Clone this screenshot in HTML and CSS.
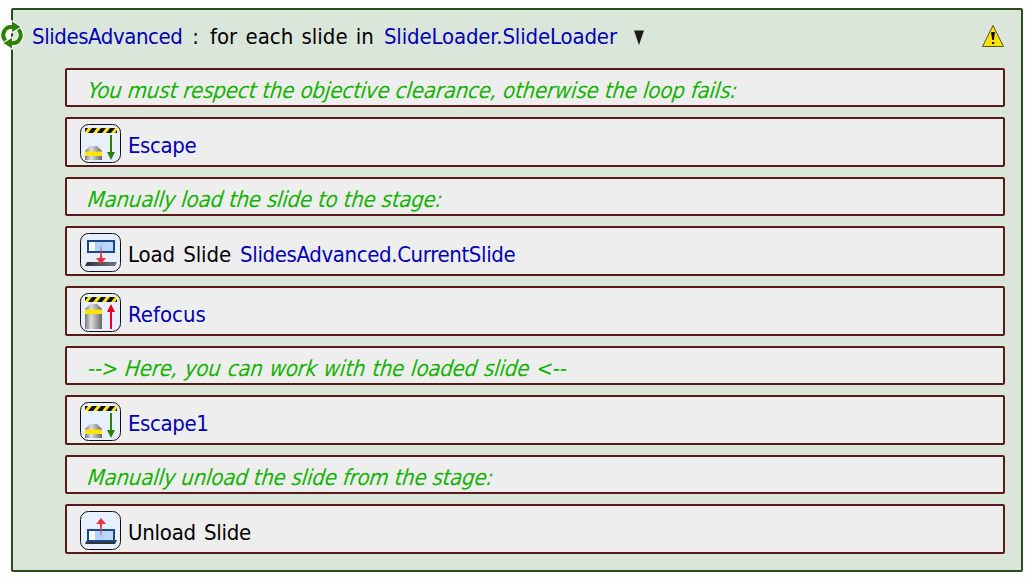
FILE: index.html
```
<!DOCTYPE html>
<html lang="en">
<head>
<meta charset="utf-8">
<title>SlidesAdvanced</title>
<link rel="stylesheet" href="styles.css">
</head>
<body>
<svg class="defs" width="0" height="0" aria-hidden="true">
  <defs>
    <linearGradient id="metal"><stop offset="0" stop-color="#777"/><stop offset=".35" stop-color="#ddd"/><stop offset=".55" stop-color="#bbb"/><stop offset="1" stop-color="#686868"/></linearGradient>
    <linearGradient id="glass"><stop offset="0" stop-color="#a6ccff"/><stop offset="1" stop-color="#c3dcff"/></linearGradient>
    <linearGradient id="fadeDown" x2="0" y2="1"><stop offset="0" stop-color="#e8333d" stop-opacity=".1"/><stop offset=".6" stop-color="#e8333d"/></linearGradient>
    <linearGradient id="fadeUp" x2="0" y2="1"><stop offset=".4" stop-color="#e8333d"/><stop offset="1" stop-color="#e8333d" stop-opacity=".1"/></linearGradient>
    <linearGradient id="plate"><stop offset="0" stop-color="#333"/><stop offset="1" stop-color="#777"/></linearGradient>
    <g id="hazard">
      <path fill="#ffe21a" d="M5 4h32v5H5z"/>
      <path fill="#111" d="M5 4h3L5 8zM12 4h5l-4 5H8zM21 4h5l-4 5h-5zM30 4h5l-4 5h-5zM37 6v3h-2z"/>
    </g>
    <g id="escape">
      <use href="#hazard"/>
      <path fill="url(#metal)" d="M5 36v-9l5-5h7l5 5v9z"/>
      <path fill="#ffe500" d="M5 27.500h17v4.500H5z"/>
      <path fill="#2b8000" d="M30 11h2v17h3l-4 8-4-8h3z"/>
    </g>
  </defs>
</svg>
<main class="loop">
  <svg class="loop-icon" width="24" height="28" viewBox="0 0 24 28">
    <path fill="none" stroke="#fdfdfd" stroke-width="6" d="M5.500 19.500A7.700 8 0 0 1 12 6M18.500 8.500A7.700 8 0 0 1 12 22"/>
    <path fill="#fdfdfd" stroke="#fdfdfd" stroke-width="2" d="M12 .5l8.500 5.500L12 11zM12 27.500l-8.500-5.500L12 17z"/>
    <path fill="none" stroke="#2b8000" stroke-width="4" d="M5.500 19.500A7.700 8 0 0 1 12 6M18.500 8.500A7.700 8 0 0 1 12 22"/>
    <path fill="#2b8000" d="M12 .5l8.500 5.500L12 11zM12 27.500l-8.500-5.500L12 17z"/>
  </svg>
  <header class="head">
    <span class="link t-name">SlidesAdvanced</span><span class="t-colon">:</span><span class="t-each">for each slide in</span><span class="link t-source">SlideLoader.SlideLoader</span>
    <svg class="caret" width="12" height="15" viewBox="0 0 12 15"><path fill="#1a1a1a" d="M1 .5h10L6 15z"/></svg>
    <svg class="warn" width="24" height="24" viewBox="0 0 24 24"><path fill="#ffe10a" stroke="#55552a" stroke-linejoin="round" d="M12 1.500 22.500 22.500h-21z"/><path fill="#111" d="M10 8h4l-1.200 8h-1.600zM11 18h2.200v2H11z"/></svg>
  </header>
  <section class="steps">
    <div class="note"><span class="n1">You must respect the objective clearance, otherwise the loop fails:</span></div>
    <div class="step"><svg class="icon" viewBox="0 0 41 39"><rect class="tile" x=".5" y=".5" width="40" height="38" rx="8"/><use href="#escape"/></svg><span class="link s-escape">Escape</span></div>
    <div class="note"><span class="n2">Manually load the slide to the stage:</span></div>
    <div class="step"><svg class="icon" viewBox="0 0 41 39"><rect class="tile" x=".5" y=".5" width="40" height="38" rx="8"/><path fill="url(#plate)" d="M7 29h30l-2 4H5z"/><path fill="url(#glass)" stroke="#174a86" stroke-width="2" d="M8 8h26v11H8z"/><path fill="#fff" d="M9 9h6v9H9z"/><path fill="url(#fadeDown)" d="M20 12h2v13h4l-5 6-5-6h4z"/></svg><span class="s-load">Load Slide</span><span class="link s-current">SlidesAdvanced.CurrentSlide</span></div>
    <div class="step"><svg class="icon" viewBox="0 0 41 39"><rect class="tile" x=".5" y=".5" width="40" height="38" rx="8"/><use href="#hazard"/><path fill="url(#metal)" d="M5 36V16l5-5h7l5 5v20z"/><path fill="#ffe500" d="M5 16.500h17V21H5z"/><path fill="#e8001c" d="M30 36V19h-3l4-8 4 8h-3v17z"/></svg><span class="link s-refocus">Refocus</span></div>
    <div class="note"><span class="n3">--&gt; Here, you can work with the loaded slide &lt;--</span></div>
    <div class="step"><svg class="icon" viewBox="0 0 41 39"><rect class="tile" x=".5" y=".5" width="40" height="38" rx="8"/><use href="#escape"/></svg><span class="link s-escape">Escape1</span></div>
    <div class="note"><span class="n4">Manually unload the slide from the stage:</span></div>
    <div class="step"><svg class="icon" viewBox="0 0 41 39"><rect class="tile" x=".5" y=".5" width="40" height="38" rx="8"/><path fill="#333" d="M7 29h30l-2 4H5z"/><path fill="url(#glass)" stroke="#174a86" stroke-width="2" d="M8 19h26v11H8z"/><path fill="#fff" d="M9 20h6v9H9z"/><path fill="url(#fadeUp)" d="M20 26V13h-4l5-6 5 6h-4v13z"/></svg><span class="s-unload">Unload Slide</span></div>
  </section>
</main>
</body>
</html>
```
FILE: styles.css
```
* { box-sizing: border-box; }
body {
  margin: 0;
  padding: 8px 7px 8px 11px;
  height: 580px;
  background: #fdfdfd;
  color: #000;
  font: 22px/26px "DejaVu Sans Condensed", "DejaVu Sans", sans-serif;
  font-stretch: condensed;
  white-space: nowrap;
}
.defs { position: absolute; }
.loop {
  position: relative;
  height: 564px;
  border: 2px solid #2a4d20;
  border-radius: 2px;
  background: #dbe6da;
}
.loop-icon { position: absolute; left: -13px; top: 11px; overflow: visible; }
.head {
  display: flex;
  align-items: center;
  height: 58px;
  padding: 0 16px 6px 19px;
}
.head span { padding-top: 2px; }
.link { color: #0000b4; }
.t-name { letter-spacing: -.43px; }
.t-colon { margin-left: 10px; }
.t-each { margin-left: 11px; word-spacing: 2px; }
.t-source { margin-left: 10px; letter-spacing: -.15px; }
.caret { margin-left: 16px; margin-top: 3px; }
.warn { margin-left: auto; }
.steps {
  display: flex;
  flex-direction: column;
  gap: 10px;
  padding: 0 16px 0 52px;
}
.note, .step {
  display: flex;
  border: 2px solid #5a1a1a;
  border-radius: 2px;
  background: #eee;
}
.note { height: 39px; padding: 8px 0 0 21px; color: #12b200; font-style: italic; }
.note span { transform: skewX(-7deg); }
.n1 { letter-spacing: -.15px; }
.n2, .n4 { letter-spacing: -.2px; }
.n3 { letter-spacing: -.2px; word-spacing: 1px; }
.step { height: 50px; padding: 5px 0 0 13px; }
.step span { margin-top: 9px; }
.icon { width: 41px; height: 39px; margin-right: 7px; }
.tile { fill: #e8f0ff; stroke: #111; }
.s-escape { letter-spacing: -.4px; }
.s-load { letter-spacing: -.1px; word-spacing: 2px; }
.s-current { margin-left: 9px; letter-spacing: -.37px; }
.s-unload { letter-spacing: -.25px; word-spacing: 2px; }
```
